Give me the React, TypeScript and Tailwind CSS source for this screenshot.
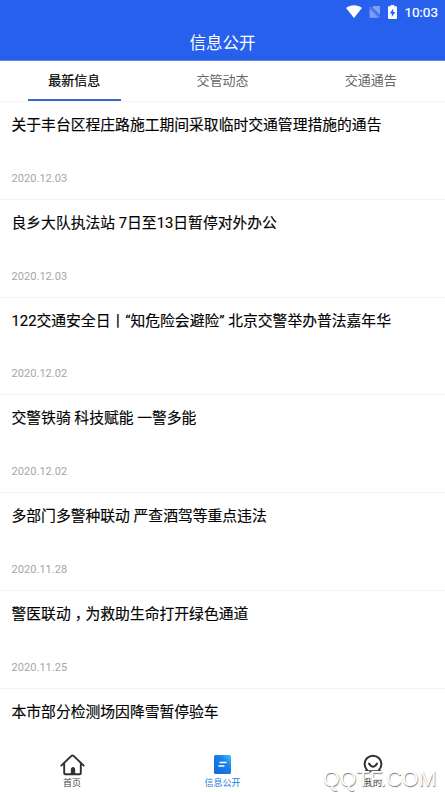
const tabs = ['最新信息', '交管动态', '交通通告'];

const news = [
  { title: '关于丰台区程庄路施工期间采取临时交通管理措施的通告', date: '2020.12.03' },
  { title: '良乡大队执法站 7日至13日暂停对外办公', date: '2020.12.03' },
  { title: '122交通安全日丨“知危险会避险” 北京交警举办普法嘉年华', date: '2020.12.02' },
  { title: '交警铁骑 科技赋能 一警多能', date: '2020.12.02' },
  { title: '多部门多警种联动 严查酒驾等重点违法', date: '2020.11.28' },
  { title: '警医联动，为救助生命打开绿色通道', date: '2020.11.25' },
  { title: '本市部分检测场因降雪暂停验车', date: '' },
];

function StatusBar() {
  return (
    <div className="flex h-6 items-center justify-end pr-[7px] text-white">
      <svg className="mr-[7px] h-[14px] w-4" viewBox="0 0 16 14" fill="currentColor">
        <path d="M0 3C4.700-.6 11.300-.6 16 3L8 13z" />
      </svg>
      <svg className="mr-[8px] h-[14px] w-[11px] opacity-40" viewBox="0 0 11 14">
        <path d="M4.300 1H11v9L3 2.300zM.6 3.600l9.100 9.100H.6z" fill="currentColor" />
        <path d="M0 1.500l11 11" stroke="currentColor" strokeWidth="1" />
      </svg>
      <svg className="mr-[7px] h-[14px] w-[9px]" viewBox="0 0 9 14" fill="currentColor">
        <path fillRule="evenodd" d="M2.700 0h3.600v1.300H8q1 0 1 1V13q0 1-1 1H1q-1 0-1-1V2.300q0-1 1-1h1.700zM5.200 3.500L1.800 8.400h2V12l3.500-5H5.200z" />
      </svg>
      <span className="font-[Roboto] text-[13.500px] leading-6 [-webkit-text-stroke:0.2px_white]">10:03</span>
    </div>
  );
}

function HomeIcon() {
  return (
    <svg className="h-[22px] w-[25px]" viewBox="0 0 25 22" fill="none" stroke="#303030" strokeWidth="1.900" strokeLinecap="round" strokeLinejoin="round">
      <path d="M1.300 11.600L11.400 1.900q1.100-1 2.200 0l10.100 9.700M4.200 9.500v9.800q0 1 1 1h14.600q1 0 1-1V9.500" />
      <path d="M11.300 20v-4.800q0-1.700 1.700-1.700t1.700 1.700V20z" fill="#303030" strokeWidth="1" />
    </svg>
  );
}

function NewsIcon() {
  return (
    <svg className="h-[22px] w-[25px]" viewBox="0 0 25 22">
      <defs>
        <linearGradient id="newsFill" x1="0" y1="1" x2="1" y2="0">
          <stop offset="0" stopColor="#1764d8" />
          <stop offset=".6" stopColor="#1680e8" />
          <stop offset="1" stopColor="#40c4f4" />
        </linearGradient>
      </defs>
      <rect x="4" y="1" width="17" height="19" rx="1.500" fill="url(#newsFill)" />
      <path d="M9.500 8.500h7M8.500 12h6" stroke="white" strokeWidth="1.700" />
    </svg>
  );
}

function ProfileIcon() {
  return (
    <svg className="h-[22px] w-[25px]" viewBox="0 0 25 22" fill="none" stroke="#303030" strokeWidth="2" strokeLinecap="round">
      <path d="M5.800 15.700A8.400 8.400 0 1 1 18.200 15.700M4.500 17.300h15" />
      <path d="M8 9.500q4 6.500 8 0" />
    </svg>
  );
}

export default function App() {
  return (
    <div className="relative flex h-[792px] w-[445px] flex-col overflow-hidden bg-white font-[Roboto,'Noto_Sans_CJK_SC',sans-serif]">
      <header className="h-[61px] shrink-0 border-b border-[#5b86dc] bg-[#2660ed]">
        <StatusBar />
        <h1 className="pt-0.5 text-center text-[16.500px] leading-9 text-white">信息公开</h1>
      </header>
      <nav className="grid h-[41px] shrink-0 grid-cols-3 border-b border-[#f5f5f5]">
        {tabs.map((tab, i) => (
          <div key={tab} className="flex justify-center">
            <span
              className={
                i === 0
                  ? 'h-10 w-[93px] border-b-2 border-[#3c67d0] text-center text-[13px] leading-[40px] text-black [-webkit-text-stroke:0.2px_black]'
                  : 'w-[93px] text-center text-[13px] leading-[40px] text-[#666]'
              }
            >
              {tab}
            </span>
          </div>
        ))}
      </nav>
      <main className="min-h-0 flex-1 overflow-hidden">
        {news.map((item) => (
          <article key={item.title} className="flex h-[97.800px] flex-col justify-between border-b border-[#f4f4f4] pt-[11px] pr-3 pb-[12px] pl-[11.500px]">
            <h2 className="text-[14.800px] leading-6 whitespace-nowrap text-black [-webkit-text-stroke:0.150px_black]">
              {item.title.split('，').map((part, i) => (
                <span key={part}>
                  {i > 0 && <span className="inline-block w-[1em] indent-[4px]">，</span>}
                  {part}
                </span>
              ))}
            </h2>
            {item.date && <time className="text-[11px] leading-4 tracking-[0.050px] text-[#a6a6a6]">{item.date}</time>}
          </article>
        ))}
      </main>
      <footer className="flex h-[50px] shrink-0 justify-between bg-white px-[47px] pt-3 text-[9px] leading-[15px] text-[#444]">
        <div className="flex w-[50px] flex-col items-center">
          <HomeIcon />
          <span>首页</span>
        </div>
        <div className="flex w-[50px] flex-col items-center text-[#237cdd]">
          <NewsIcon />
          <span>信息公开</span>
        </div>
        <div className="flex w-[50px] flex-col items-center">
          <ProfileIcon />
          <span>我的</span>
        </div>
      </footer>
      <div className="absolute top-[767px] left-[323px] font-['Liberation_Sans',sans-serif] text-[21.500px] leading-6 whitespace-nowrap text-white [text-shadow:0.500px_1px_1px_#777]">
        QQTF.COM
      </div>
    </div>
  );
}
